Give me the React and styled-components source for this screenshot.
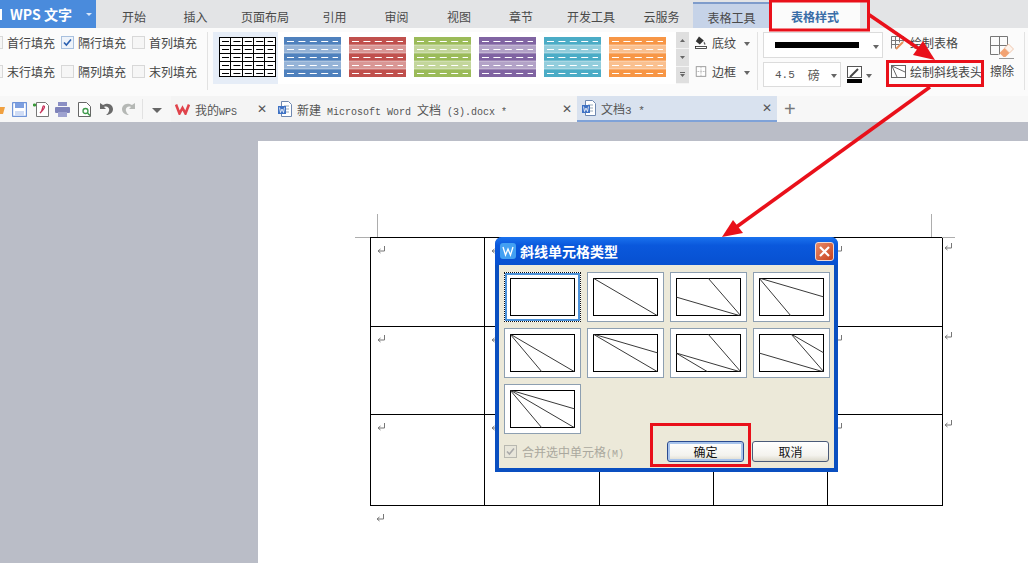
import React from 'react'
import styled, { createGlobalStyle } from 'styled-components'

const Global = createGlobalStyle`
html,body{margin:0;padding:0;background:#babdc7;}
body{font-family:"Noto Sans CJK SC","Liberation Sans",sans-serif;font-size:12px;color:#444;}
`
const Shell = styled.div`
position:relative;
width:1028px;
height:563px;
overflow:hidden;
display:flex;
flex-direction:column;
`
/* top tabs */
const TabBar = styled.div`
height:28px;
flex:none;
display:flex;
background:#e3e4e6;
`
const Logo = styled.div`
width:96px;
margin-right:7px;
flex:none;
background:#4a8bdc;
color:#fff;
font-weight:700;
font-size:14px;
display:flex;
align-items:center;
box-sizing:border-box;
padding-left:10px;
white-space:nowrap;
&::before{content:"";width:2px;height:11px;background:#fff;margin-left:-10px;margin-right:8px;}
`
const LogoCaret = styled.span`
margin-left:auto;
margin-right:4px;
border:3px solid transparent;
border-top-color:#d8e7fa;
margin-top:3px;
`
const Tab = styled.div`
width:${p => p.$w}px;
flex:none;
display:flex;
align-items:center;
justify-content:center;
font-size:12px;
color:#4a4a4a;
box-sizing:border-box;
padding-top:4px;
${p => p.$tool && `background:#c6d3e8;border-top:2px solid #7f9ccb;margin-top:2px;padding-top:2px;`}
${p => p.$active && `background:#fbfbfb;color:#3a6ea8;font-weight:700;margin-top:2px;padding-top:2px;`}
`
/* ribbon */
const Ribbon = styled.div`
height:68px;
flex:none;
display:flex;
background:#fbfbfb;
`
const Sep = styled.div`
width:1px;
height:${p => p.$h || 58}px;
margin-top:${p => p.$mt ?? 4}px;
margin-left:${p => p.$ml}px;
background:#e2e2e2;
flex:none;
`
const CheckGrid = styled.div`
margin-left:-10px;
width:213px;
flex:none;
display:grid;
grid-template-columns:repeat(3,71px);
grid-template-rows:29px 29px;
`
const CheckRow = styled.div`
display:flex;
align-items:center;
gap:4px;
white-space:nowrap;
color:#444;
`
const Box = styled.span`
width:11px;
height:11px;
flex:none;
border:1px solid ${p => p.$on ? '#a8c0de' : '#d8d8d8'};
background:${p => p.$on ? '#eef3fa' : '#f6f6f6'};
display:flex;
align-items:center;
justify-content:center;
`
const Gallery = styled.div`
margin-left:5px;
margin-top:4px;
width:463px;
height:52px;
flex:none;
display:flex;
box-sizing:border-box;
background:#fff;
`
const SwatchCell = styled.div`
width:65px;
flex:none;
display:flex;
box-sizing:border-box;
padding:5px 0 0 6px;
background:${p => p.$first ? '#e6edf7' : 'transparent'};
`
const ScrollCol = styled.div`
width:13px;
height:52px;
margin-top:4px;
flex:none;
background:#dfdfdf;
display:flex;
flex-direction:column;
`
const ScrollBtn = styled.div`
flex:1;
display:flex;
align-items:center;
justify-content:center;
border-bottom:1px solid #f4f4f4;
`
const Stack = styled.div`
margin-left:${p => p.$ml}px;
width:${p => p.$w}px;
flex:none;
display:flex;
flex-direction:column;
`
const ToolRow = styled.div`
height:29px;
display:flex;
align-items:center;
gap:${p => p.$gap || 4}px;
white-space:nowrap;
`
const Caret = styled.span`
flex:none;
margin-left:${p => p.$ml || 0}px;
margin-top:3px;
border:${p => p.$big ? 5 : 3}px solid transparent;
border-top:${p => p.$big ? 5 : 4}px solid #666;
border-bottom:0;
`
const LineCombo = styled.div`
width:120px;
height:26px;
margin-top:4px;
flex:none;
box-sizing:border-box;
border:1px solid #dcdcdc;
background:#fff;
display:flex;
align-items:center;
padding:0 3px 0 11px;
`
const LineSample = styled.div`
width:85px;
height:6px;
background:#000;
`
const WeightRow = styled.div`
display:flex;
align-items:center;
margin-top:4px;
`
const WeightCombo = styled.div`
width:78px;
height:25px;
box-sizing:border-box;
border:1px solid #dcdcdc;
background:#fff;
display:flex;
align-items:center;
padding:0 4px 0 11px;
color:#555;
`
const WeightUnit = styled.span`
margin-left:13px;
`
const PenSlot = styled.span`
display:flex;
margin-left:6px;
`
const Mono = styled.span`
font-family:"Liberation Mono",monospace;
font-size:${p => p.$s || 10}px;
white-space:pre;
`
const EraseCol = styled.div`
margin-left:5px;
width:24px;
flex:none;
display:flex;
flex-direction:column;
align-items:center;
padding-top:8px;
box-sizing:border-box;
white-space:nowrap;
gap:2px;
`
/* quick bar + doc tabs */
const DocBar = styled.div`
height:26px;
flex:none;
display:flex;
align-items:center;
background:#f7f7f7;
`
const Quick = styled.div`
width:171px;
flex:none;
display:flex;
align-items:center;
height:100%;
`
const QuickIcon = styled.span`
display:flex;
margin-left:${p => p.$ml}px;
flex:none;
`
const DocTab = styled.div`
width:${p => p.$w}px;
height:100%;
flex:none;
box-sizing:border-box;
display:flex;
align-items:center;
gap:5px;
padding-left:${p => p.$pl}px;
white-space:nowrap;
color:#555;
background:${p => p.$on ? '#d9e2ef' : '#f4f4f4'};
border-bottom:${p => p.$on ? '2px solid #7fa2d8' : '0'};
`
const TabClose = styled.span`
margin-left:auto;
margin-right:${p => p.$mr}px;
font-size:12px;
line-height:1;
color:#555;
font-family:"Liberation Sans",sans-serif;
`
const PlusBtn = styled.div`
margin-left:7px;
color:#777;
font-size:20px;
font-family:"Liberation Sans",sans-serif;
line-height:1;
`
/* document */
const Workspace = styled.div`
flex:1;
min-height:0;
background:#babdc7;
padding:19px 0 0 258px;
overflow:hidden;
`
const Page = styled.div`
position:relative;
background:#fff;
height:500px;
box-sizing:border-box;
padding:96px 0 0 112px;
`
const Crop = styled.i`
position:absolute;
background:#adadad;
left:${p => p.$x}px;
top:${p => p.$y}px;
width:${p => p.$w}px;
height:${p => p.$h}px;
`
const DocTable = styled.table`
border-collapse:collapse;
table-layout:fixed;
width:588px;
`
const Cell = styled.td`
border:1px solid #000;
height:${p => p.$h}px;
width:${p => p.$w}px;
padding:3px 0 0 6px;
vertical-align:top;
box-sizing:border-box;
`
const EndCell = styled.td`
width:16px;
padding:0 0 0 1px;
vertical-align:top;
box-sizing:border-box;
`
const Para = styled.div`
padding:3px 0 0 6px;
`
/* dialog */
const Dialog = styled.div`
position:absolute;
left:495px;
top:237px;
width:343px;
height:235px;
box-sizing:border-box;
background:#0a4fc0;
border-radius:7px 7px 0 0;
padding:0 4px 4px;
display:flex;
flex-direction:column;
color:#222;
`
const TitleBar = styled.div`
height:28px;
flex:none;
margin:0 -4px;
padding:0 4px 0 5px;
border-radius:7px 7px 0 0;
background:linear-gradient(#1a72ee,#0a58dc 30%,#0750d0);
display:flex;
align-items:center;
gap:4px;
color:#fff;
font-weight:700;
font-size:14px;
`
const CloseBtn = styled.div`
margin-left:auto;
width:19px;
height:19px;
box-sizing:border-box;
border:1px solid #f0d8d0;
border-radius:3px;
background:linear-gradient(135deg,#e88a68,#c8431e);
display:flex;
align-items:center;
justify-content:center;
`
const DialogBody = styled.div`
flex:1;
background:#ece9d9;
padding:7px 5px 0 5px;
display:flex;
flex-direction:column;
`
const TypeGrid = styled.div`
display:grid;
grid-template-columns:repeat(4,77px);
grid-auto-rows:50px;
gap:6px;
`
const TypeCell = styled.div`
box-sizing:border-box;
background:#fff;
border:1px solid #8d9fb1;
display:flex;
align-items:center;
justify-content:center;
${p => p.$sel && `border:1px dotted #111;box-shadow:inset 0 0 0 2px #4a90d8;`}
`
const DialogFoot = styled.div`
margin-top:7px;
display:flex;
align-items:center;
`
const MergeBox = styled.span`
width:11px;
height:11px;
flex:none;
border:1px solid #b8b8b0;
background:#e8e6da;
display:flex;
align-items:center;
justify-content:center;
margin-right:5px;
`
const MergeLabel = styled.span`
color:#aaa89e;
white-space:nowrap;
font-size:12px;
`
const DlgButton = styled.button`
width:77px;
height:21px;
flex:none;
margin-left:${p => p.$def ? 'auto' : '8px'};
padding:0;
box-sizing:border-box;
border:1px solid #4a5a78;
border-radius:3px;
font-family:inherit;
font-size:12px;
color:#111;
background:linear-gradient(#ffffff,#f4f3ee 70%,#dcd9cc);
${p => p.$def && `box-shadow:inset 0 0 0 2px #a8c4ec;border-color:#2a4a90;`}
`
const Notes = styled.svg`
position:absolute;
left:0;
top:0;
pointer-events:none;
`

const RED = '#e9101a'

const stripeSets = [
  ['#4f81bd', '#95b3d7'],
  ['#c0504d', '#d99694'],
  ['#9bbb59', '#c3d69b'],
  ['#8064a2', '#b2a2c7'],
  ['#4bacc6', '#92cddc'],
  ['#f79646', '#fac08f'],
]

const PlainSwatch = () => (
  <svg width="57" height="40">
    <rect x=".5" y=".5" width="56" height="39" fill="#fff" stroke="#000" />
    {[8, 16, 24, 32].map(y => <line key={y} x1="0" x2="57" y1={y + .5} y2={y + .5} stroke="#000" />)}
    {[11, 23, 34, 45].map(x => <line key={x} x1={x + .5} x2={x + .5} y1="0" y2="40" stroke="#000" />)}
    {[4, 12, 20, 28, 36].map(y => <line key={y} x1="3" x2="54" y1={y + .5} y2={y + .5} stroke="#000" strokeDasharray="7 4.4" />)}
  </svg>
)
const Swatch = ({ dark, light }) => (
  <svg width="57" height="40">
    <rect width="57" height="40" fill={dark} />
    <rect y="8" width="57" height="8" fill={light} />
    <rect y="24" width="57" height="8" fill={light} />
    {[8, 16, 24, 32].map(y => <line key={y} x1="0" x2="57" y1={y} y2={y} stroke="#fff" strokeOpacity=".45" />)}
    {[4, 12, 20, 28, 36].map(y => <line key={y} x1="3" x2="54" y1={y + .5} y2={y + .5} stroke="#fff" strokeDasharray="7 4.4" />)}
  </svg>
)
const CheckMark = ({ c = '#2a5fb0' }) => (
  <svg width="9" height="9" viewBox="0 0 9 9"><path d="M1 4.500l2.400 2.600L8 1.500" fill="none" stroke={c} strokeWidth="1.6" /></svg>
)
const TinyArrow = ({ d }) => (
  <svg width="7" height="7" viewBox="0 0 7 7"><path d={d} fill="#666" /></svg>
)
const Fill = () => (
  <svg width="15" height="17" viewBox="0 0 15 17">
    <path d="M5 1l6 5-5 5-5-4z" fill="#333" />
    <path d="M11 7c1.500 2 2.500 3 2 4s-2.500.5-2-4z" fill="#555" />
    <rect x=".5" y="13.500" width="14" height="2.500" fill="#fff" stroke="#222" />
  </svg>
)
const BorderIcon = () => (
  <svg width="15" height="15" viewBox="0 0 15 15">
    <rect x="1.500" y="1.500" width="12" height="12" fill="#fff" stroke="#888" />
    <path d="M7.500 2v11M2 7.500h11" stroke="#999" strokeDasharray="1 1" />
  </svg>
)
const PenIcon = () => (
  <svg width="15" height="18" viewBox="0 0 15 18">
    <rect x=".5" y=".5" width="14" height="11" fill="#fff" stroke="#555" />
    <path d="M3 11L11 3" stroke="#444" strokeWidth="2" />
    <rect y="13" width="15" height="4" fill="#000" />
  </svg>
)
const DrawTable = () => (
  <svg width="15" height="14" viewBox="0 0 15 14">
    <path d="M.5 12.500V.5h12v5M.5 4.500h12M.5 8.500h8M4.500.5v12M8.500.5v6" fill="none" stroke="#777" />
    <path d="M5 13l7-7" stroke="#e8905a" strokeWidth="2" />
  </svg>
)
const DiagIcon = () => (
  <svg width="15" height="13" viewBox="0 0 15 13">
    <rect x=".5" y=".5" width="14" height="12" fill="#fff" stroke="#666" />
    <path d="M1 1l13 6M1 1l5 11" stroke="#666" fill="none" />
  </svg>
)
const Eraser = () => (
  <svg width="24" height="24" viewBox="0 0 24 24">
    <path d="M.5 18.500V.5h17v9M.5 9.500h17M9.500.5v18M.5 18.500h8" fill="none" stroke="#777" />
    <path d="M9.500 17l5-5 5 5-4 4h-2z" fill="#f2a272" />
    <path d="M14.500 12l4-4 5 5-4 4z" fill="#fdf3ec" stroke="#e8a880" strokeWidth=".6" />
    <path d="M9 22.500h15" stroke="#999" />
  </svg>
)
const Save = () => (
  <svg width="15" height="15" viewBox="0 0 15 15">
    <rect x=".5" y=".5" width="14" height="14" rx="1" fill="#fff" stroke="#6f94d8" strokeWidth="1.400" />
    <rect x="3" y="1" width="9" height="5" fill="#7d9fe0" />
    <rect x="3" y="9" width="9" height="5" fill="#cfdcf5" />
  </svg>
)
const PdfDoc = () => (
  <svg width="16" height="15" viewBox="0 0 16 15">
    <path d="M3.500.5h9l3 3v11h-12z" fill="#fff" stroke="#777" />
    <path d="M0 3h3M1.500 1.500v3" stroke="#3a9a3a" strokeWidth="2" />
    <path d="M7 11c3-1 2-8 4-7s-2 5-4 7z" fill="none" stroke="#c8325a" strokeWidth="1.200" />
  </svg>
)
const Printer = () => (
  <svg width="15" height="15" viewBox="0 0 15 15">
    <rect x="3" y="0" width="9" height="4" fill="#8b8fc4" />
    <rect x="0" y="5" width="15" height="6" rx="1" fill="#7f83ba" />
    <rect x="3" y="10" width="9" height="5" fill="#9ea2d0" />
  </svg>
)
const Preview = () => (
  <svg width="13" height="15" viewBox="0 0 13 15">
    <path d="M.5.5h8l4 4v10H.5z" fill="#fff" stroke="#666" />
    <circle cx="7.500" cy="9" r="2.500" fill="none" stroke="#3d9a4a" strokeWidth="1.300" />
    <path d="M9.500 11l2.500 2.500" stroke="#3d9a4a" strokeWidth="1.500" />
  </svg>
)
const UndoGlyph = ({ c, className }) => (
  <svg className={className} width="13" height="14" viewBox="0 0 13 14">
    <path d="M0 1v6h6L4 5c3-1.500 6 1 5 4-.4 1.500-1.500 3-3 4 4 0 7-2.500 7-6S9-.5 3 3z" fill={c} />
  </svg>
)
const Redo = styled(UndoGlyph)`
transform:scaleX(-1);
`
const WordDoc = () => (
  <svg width="14" height="16" viewBox="0 0 14 16">
    <path d="M3.500.5h7l3 3v12h-10z" fill="#fff" stroke="#6f88b0" />
    <path d="M6 5h5M6 8h5M6 11h5" stroke="#9ab" />
    <rect x="0" y="5" width="8" height="8" fill="#3f72c4" />
    <path d="M1.500 6.500l1 5 1.500-3.500 1.500 3.500 1-5" fill="none" stroke="#fff" strokeWidth=".8" />
  </svg>
)
const WpsMark = () => (
  <svg width="15" height="12" viewBox="0 0 15 12">
    <path d="M1 1.500l3.500 9L7.500 5l3 5.500L14 1.500" fill="none" stroke="#e0434b" strokeWidth="2.600" />
  </svg>
)
const DialogLogo = () => (
  <svg width="16" height="16" viewBox="0 0 16 16">
    <rect width="16" height="16" rx="3" fill="#43a0f2" />
    <path d="M3 4l2.500 8L8 6l2.500 6L13 4" fill="none" stroke="#fff" strokeWidth="1.300" />
  </svg>
)
const Ret = () => (
  <svg width="9" height="9" viewBox="0 0 9 9">
    <path d="M7.500 0v5H1.500M3.500 3L1 5l2.500 2" fill="none" stroke="#777" />
  </svg>
)

const slants = [
  [],
  [[0, 0, 65, 38]],
  [[65, 38, 32, 0], [65, 38, 0, 19]],
  [[0, 0, 65, 19], [0, 0, 32, 38]],
  [[0, 0, 65, 38], [0, 0, 32, 38]],
  [[0, 0, 65, 38], [0, 0, 65, 19]],
  [[65, 38, 32, 0], [65, 38, 0, 19], [0, 19, 32, 38]],
  [[65, 38, 32, 0], [32, 0, 65, 19], [65, 38, 0, 19]],
  [[0, 0, 65, 19], [0, 0, 65, 38], [0, 0, 32, 38]],
]
const SlantBox = ({ lines }) => (
  <svg width="65" height="38" viewBox="0 0 65 38">
    <rect x=".5" y=".5" width="64" height="37" fill="#fff" stroke="#000" />
    {lines.map((l, i) => <line key={i} x1={l[0]} y1={l[1]} x2={l[2]} y2={l[3]} stroke="#222" strokeWidth=".9" />)}
  </svg>
)

const tabs = [
  ['开始', 62], ['插入', 61], ['页面布局', 78], ['引用', 61], ['审阅', 63],
  ['视图', 62], ['章节', 62], ['开发工具', 78], ['云服务', 63],
]
const rowHeights = [89, 88, 91]
const colWidths = [114, 115, 114, 114, 115]

export default function App() {
  return (
    <Shell>
      <Global />
      <TabBar>
        <Logo>WPS 文字<LogoCaret /></Logo>
        {tabs.map(([t, w]) => <Tab key={t} $w={w}>{t}</Tab>)}
        <Tab $w={77} $tool>表格工具</Tab>
        <Tab $w={90} $active>表格样式</Tab>
      </TabBar>
      <Ribbon>
        <CheckGrid>
          <CheckRow><Box />首行填充</CheckRow>
          <CheckRow><Box $on><CheckMark /></Box>隔行填充</CheckRow>
          <CheckRow><Box />首列填充</CheckRow>
          <CheckRow><Box />末行填充</CheckRow>
          <CheckRow><Box />隔列填充</CheckRow>
          <CheckRow><Box />末列填充</CheckRow>
        </CheckGrid>
        <Sep $ml={4} />
        <Gallery>
          <SwatchCell $first><PlainSwatch /></SwatchCell>
          {stripeSets.map(([d, l]) => (
            <SwatchCell key={d}><Swatch dark={d} light={l} /></SwatchCell>
          ))}
        </Gallery>
        <ScrollCol>
          <ScrollBtn><TinyArrow d="M3.500 2L6 5H1z" /></ScrollBtn>
          <ScrollBtn><TinyArrow d="M1 2h5L3.500 5z" /></ScrollBtn>
          <ScrollBtn><TinyArrow d="M1 1h5v1H1zM1 3h5L3.500 6z" /></ScrollBtn>
        </ScrollCol>
        <Stack $ml={6} $w={55}>
          <ToolRow $gap={5}><Fill />底纹<Caret $ml={3} /></ToolRow>
          <ToolRow $gap={5}><BorderIcon />边框<Caret $ml={3} /></ToolRow>
        </Stack>
        <Sep $ml={7} />
        <Stack $ml={5} $w={120}>
          <LineCombo><LineSample /><Caret $ml={14} /></LineCombo>
          <WeightRow>
            <WeightCombo>
              <Mono $s={11}>4.5</Mono>
              <WeightUnit>磅</WeightUnit>
              <Caret $ml={11} />
            </WeightCombo>
            <PenSlot><PenIcon /></PenSlot>
            <Caret $ml={4} />
          </WeightRow>
        </Stack>
        <Stack $ml={8} $w={94}>
          <ToolRow><DrawTable />绘制表格</ToolRow>
          <ToolRow><DiagIcon />绘制斜线表头</ToolRow>
        </Stack>
        <EraseCol>
          <Eraser />
          <span>擦除</span>
        </EraseCol>
        <Sep $ml={10} />
      </Ribbon>
      <DocBar>
        <Quick>
          <QuickIcon $ml={-6}>
            <svg width="11" height="11" viewBox="0 0 11 11"><path d="M0 3h11l-2 7H0z" fill="#f0a040" /></svg>
          </QuickIcon>
          <QuickIcon $ml={7}><Save /></QuickIcon>
          <QuickIcon $ml={6}><PdfDoc /></QuickIcon>
          <QuickIcon $ml={6}><Printer /></QuickIcon>
          <QuickIcon $ml={8}><Preview /></QuickIcon>
          <QuickIcon $ml={9}><UndoGlyph c="#6a6a6a" /></QuickIcon>
          <QuickIcon $ml={9}><Redo c="#b5b8b5" /></QuickIcon>
          <Sep $ml={7} $h={20} $mt={0} />
          <Caret $ml={9} $big />
        </Quick>
        <DocTab $w={106} $pl={4}>
          <WpsMark />
          <span>我的<Mono>WPS</Mono></span>
          <TabClose $mr={10}>✕</TabClose>
        </DocTab>
        <DocTab $w={300} $pl={1}>
          <WordDoc />
          <span>新建<Mono> Microsoft Word </Mono>文档<Mono> (3).docx *</Mono></span>
          <TabClose $mr={5}>✕</TabClose>
        </DocTab>
        <DocTab $w={200} $on $pl={5}>
          <WordDoc />
          <span>文档<Mono $s={11}>3 *</Mono></span>
          <TabClose $mr={5}>✕</TabClose>
        </DocTab>
        <PlusBtn>+</PlusBtn>
      </DocBar>
      <Workspace>
        <Page>
          <Crop $x={119} $y={73} $w={1} $h={23} />
          <Crop $x={97} $y={96} $w={15} $h={1} />
          <Crop $x={673} $y={73} $w={1} $h={23} />
          <Crop $x={684} $y={96} $w={13} $h={1} />
          <DocTable>
            <tbody>
              {rowHeights.map(h => (
                <tr key={h}>
                  {colWidths.map((w, i) => (
                    <Cell key={i} $h={h} $w={w}><Ret /></Cell>
                  ))}
                  <EndCell><Ret /></EndCell>
                </tr>
              ))}
            </tbody>
          </DocTable>
          <Para><Ret /></Para>
        </Page>
      </Workspace>
      <Dialog>
        <TitleBar>
          <DialogLogo />
          斜线单元格类型
          <CloseBtn>
            <svg width="11" height="11" viewBox="0 0 11 11"><path d="M1 1l9 9M10 1l-9 9" stroke="#fff" strokeWidth="2.200" /></svg>
          </CloseBtn>
        </TitleBar>
        <DialogBody>
          <TypeGrid>
            {slants.map((l, i) => (
              <TypeCell key={i} $sel={i === 0}><SlantBox lines={l} /></TypeCell>
            ))}
          </TypeGrid>
          <DialogFoot>
            <MergeBox><CheckMark c="#aaa" /></MergeBox>
            <MergeLabel>合并选中单元格<Mono>(M)</Mono></MergeLabel>
            <DlgButton $def>确定</DlgButton>
            <DlgButton>取消</DlgButton>
          </DialogFoot>
        </DialogBody>
      </Dialog>
      <Notes width="1028" height="563" viewBox="0 0 1028 563" fill="none">
        <rect x="770.500" y="1" width="98" height="29" stroke={RED} strokeWidth="3" />
        <rect x="887.500" y="61.500" width="95" height="24" stroke={RED} strokeWidth="3" />
        <rect x="651.500" y="424.500" width="98" height="41" stroke={RED} strokeWidth="3" />
        <path d="M868 14L925 53" stroke={RED} strokeWidth="3.500" />
        <path d="M935 60l-22-5 10-14z" fill={RED} />
        <path d="M930 87L735 228" stroke={RED} strokeWidth="3.500" />
        <path d="M722 237l11-17 10 13z" fill={RED} />
      </Notes>
    </Shell>
  )
}
